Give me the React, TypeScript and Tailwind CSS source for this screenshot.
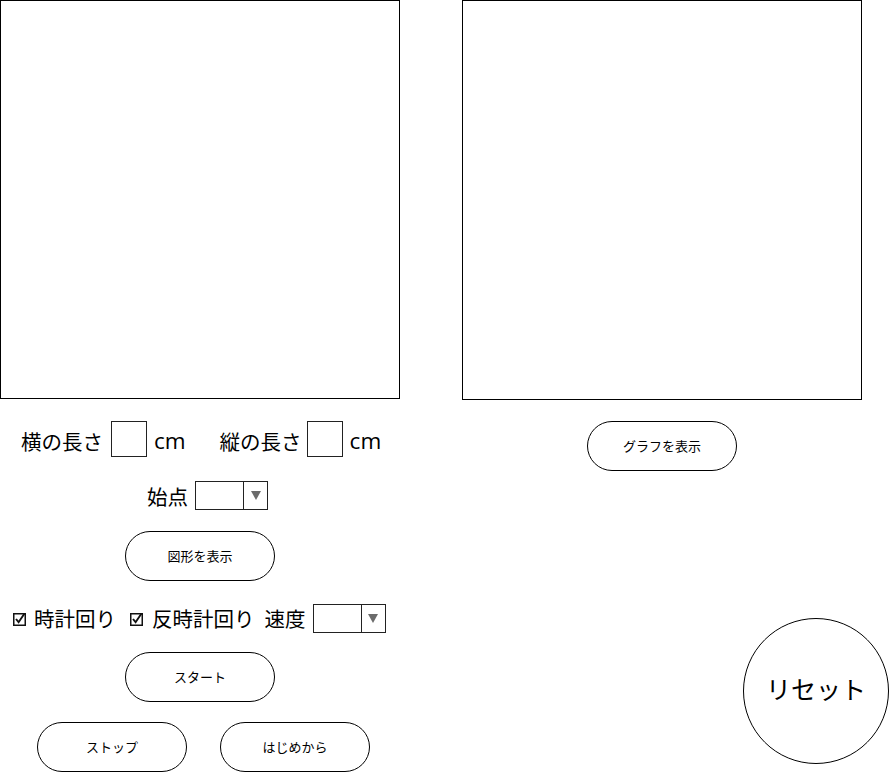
const jp = { fontFamily: '"Noto Sans CJK JP", "Noto Sans", sans-serif' }
const latin = { fontFamily: '"Open Sans", "Noto Sans CJK JP", sans-serif' }

function Pill({ label, className = '' }: { label: string; className?: string }) {
  return (
    <div
      className={`w-[150px] h-[50px] rounded-full border-[1.5px] border-black flex items-center justify-center text-[13px] text-black ${className}`}
      style={jp}
    >
      {label}
    </div>
  )
}

function Dropdown({ className = '' }: { className?: string }) {
  return (
    <div className={`w-[73px] h-[29px] border border-[#222] flex ${className}`}>
      <div className="w-[48px] h-full border-r border-[#222]" />
      <div className="flex-1 flex items-center justify-center">
        <svg width="10" height="9" viewBox="0 0 10 9">
          <path d="M0 0 L10 0 L5 9 Z" fill="#6b6b6b" />
        </svg>
      </div>
    </div>
  )
}

function Check() {
  return (
    <svg width="14" height="14" viewBox="0 0 14 14" className="shrink-0 block">
      <rect x="0.75" y="1.75" width="11.5" height="11.5" fill="none" stroke="#111" strokeWidth="1.5" />
      <path d="M3 7 L5.6 10.2 L11.5 1.5" fill="none" stroke="#111" strokeWidth="1.9" />
    </svg>
  )
}

export default function App() {
  return (
    <div className="w-[889px] h-[772px] bg-white flex text-black overflow-hidden">
      {/* left side */}
      <div className="w-[400px] flex flex-col shrink-0">
        <div className="w-[400px] h-[400px] border border-black" />

        <div className="mt-[22px] h-[36px] flex items-center text-[20.5px]" style={jp}>
          <span className="ml-[21px] pt-[5px]">横の長さ</span>
          <div className="ml-[8px] w-[36px] h-[36px] border border-[#222]" />
          <span className="ml-[7px] pt-[5px] text-[22.5px] leading-none" style={latin}>cm</span>
          <span className="ml-[34px] pt-[5px]">縦の長さ</span>
          <div className="ml-[5px] w-[36px] h-[36px] border border-[#222]" />
          <span className="ml-[7px] pt-[5px] text-[22.5px] leading-none" style={latin}>cm</span>
        </div>

        <div className="mt-[24px] h-[29px] flex items-center text-[20.5px]" style={jp}>
          <span className="ml-[147px] pt-[2px]">始点</span>
          <Dropdown className="ml-[7px]" />
        </div>

        <Pill label="図形を表示" className="mt-[21px] ml-[125px]" />

        <div className="mt-[23px] h-[29px] flex items-center text-[20.5px]" style={jp}>
          <span className="ml-[13px]"><Check /></span>
          <span className="ml-[7px]">時計回り</span>
          <span className="ml-[14px]"><Check /></span>
          <span className="ml-[8px]">反時計回り</span>
          <span className="ml-[10px]">速度</span>
          <Dropdown className="ml-[7px]" />
        </div>

        <Pill label="スタート" className="mt-[19px] ml-[125px]" />

        <div className="mt-[20px] flex">
          <Pill label="ストップ" className="ml-[37px]" />
          <Pill label="はじめから" className="ml-[33px]" />
        </div>
      </div>

      {/* right side */}
      <div className="ml-[62px] flex-1 flex flex-col">
        <div className="w-[400px] h-[400px] border border-black" />
        <Pill label="グラフを表示" className="mt-[21px] ml-[125px]" />
        <div
          className="mt-[147px] self-end w-[146px] h-[146px] rounded-full border border-black flex items-center justify-center pb-[4px] text-[25px]"
          style={jp}
        >
          リセット
        </div>
      </div>
    </div>
  )
}
